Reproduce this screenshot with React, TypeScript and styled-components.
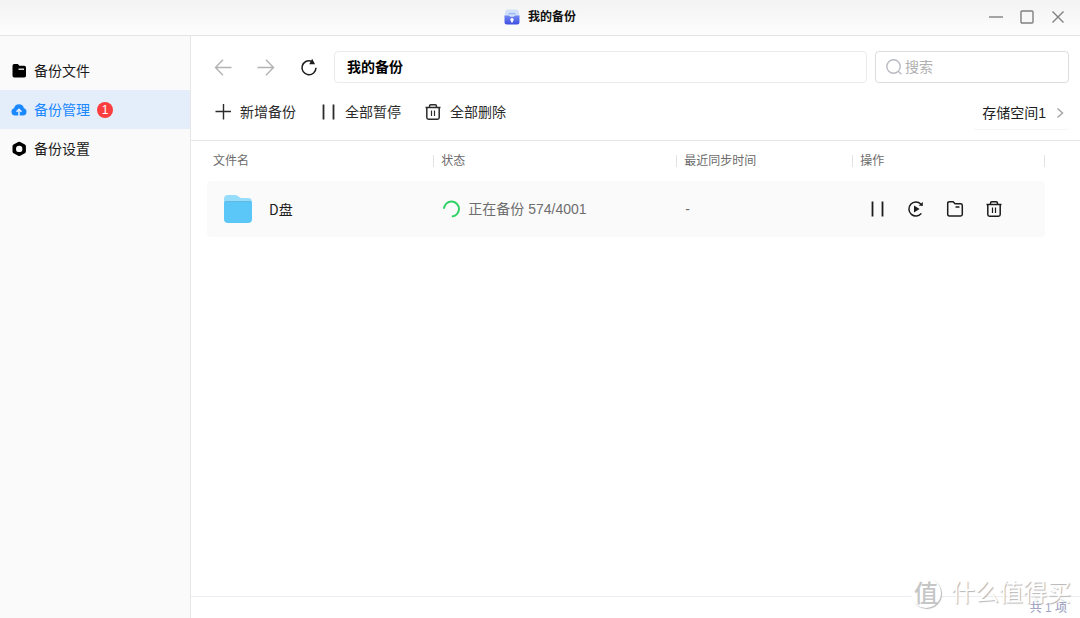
import React from "react";
import styled, { createGlobalStyle, css } from "styled-components";

const Global = createGlobalStyle`
  *, *::before, *::after { box-sizing: border-box; }
  body {
    margin: 0;
    background: #fff;
    color: #1c1c1c;
    font-family: "Liberation Sans", "Noto Sans CJK SC", sans-serif;
    font-size: 14px;
    line-height: 20px;
  }
  button, input { font: inherit; color: inherit; }
  svg { display: block; flex: none; }
`;

const Window = styled.div`
  position: relative;
  display: flex;
  flex-direction: column;
  min-height: 100vh;
`;

const TitleBar = styled.header`
  display: grid;
  grid-template-columns: 1fr auto 1fr;
  align-items: center;
  height: 36px;
  padding: 0 14px 2px;
  background: linear-gradient(#f3f3f3, #fdfdfd);
  border-bottom: 1px solid #e4e4e4;
`;

const Title = styled.h1`
  grid-column: 2;
  display: flex;
  align-items: center;
  gap: 8px;
  margin: 0;
  font-size: 12px;
  line-height: 16px;
  font-weight: 700;
  color: #111;
`;

const WindowControls = styled.div`
  display: flex;
  justify-content: flex-end;
  gap: 15px;
`;

const IconButton = styled.button<{ $size?: number }>`
  display: grid;
  place-items: center;
  width: ${(p) => p.$size ?? 20}px;
  height: ${(p) => p.$size ?? 20}px;
  padding: 0;
  border: 0;
  background: none;
  color: #1c1c1c;
  &:disabled { color: #b2b2b2; }
`;

const Body = styled.div`
  flex: 1;
  display: flex;
`;

const Sidebar = styled.nav`
  flex: none;
  width: 191px;
  padding-top: 15px;
  background: #fafafa;
  border-right: 1px solid #e6e6e6;
`;

const NavItem = styled.a<{ $active?: boolean }>`
  display: flex;
  align-items: center;
  gap: 7px;
  height: 39px;
  padding-left: 11px;
  color: #1a1a1a;
  text-decoration: none;
  ${(p) =>
    p.$active &&
    css`
      background: #e4eefb;
      color: #1a88ff;
    `}
`;

const Badge = styled.span`
  display: grid;
  place-items: center;
  width: 16px;
  height: 16px;
  border-radius: 50%;
  background: #fc3d3f;
  color: #fff;
  font-size: 12px;
  line-height: 16px;
`;

const Main = styled.main`
  flex: 1;
  min-width: 0;
  display: flex;
  flex-direction: column;
`;

const AddressRow = styled.div`
  display: flex;
  align-items: center;
  gap: 8px;
  padding: 15px 11px 0 22px;
`;

const History = styled.div`
  display: flex;
  gap: 23px;
  margin-right: 7px;
`;

const PathBar = styled.nav`
  flex: 1;
  height: 32px;
  padding: 5px 12px;
  border: 1px solid #ebebeb;
  border-radius: 4px;
`;

const PathLink = styled.a`
  color: #000;
  font-weight: 700;
  text-decoration: none;
`;

const SearchBox = styled.label`
  display: flex;
  align-items: center;
  gap: 2px;
  width: 194px;
  height: 32px;
  padding: 0 9px;
  border: 1px solid #dcdcdc;
  border-radius: 4px;
`;

const SearchInput = styled.input`
  flex: 1;
  min-width: 0;
  padding: 0;
  border: 0;
  outline: 0;
  background: none;
  &::placeholder { color: #b0b0b0; opacity: 1; }
`;

const ActionRow = styled.div`
  display: flex;
  align-items: center;
  gap: 24px;
  height: 58px;
  padding: 0 11px 0 24px;
  border-bottom: 1px solid #e6e6e6;
`;

const ActionButton = styled.button`
  display: flex;
  align-items: center;
  gap: 9px;
  padding: 0;
  border: 0;
  background: none;
  color: #2b2b2b;
`;

const StorageButton = styled.button`
  display: flex;
  align-items: center;
  gap: 8px;
  height: 32px;
  margin: 4px 0 0 auto;
  padding: 0 3px 0 8px;
  border: 0;
  border-bottom: 1px solid #f5f5f5;
  border-radius: 4px;
  background: none;
`;

const TableArea = styled.div`
  flex: 1;
  padding: 0 35px 0 16px;
`;

const Table = styled.table`
  width: 100%;
  table-layout: fixed;
  border-collapse: separate;
  border-spacing: 0;
`;

const HeadCell = styled.th<{ $width: number }>`
  width: ${(p) => p.$width}%;
  height: 40px;
  padding: 0;
  text-align: left;
  font-weight: 400;
  font-size: 12px;
  line-height: 12px;
  color: #6b6b6b;
`;

const HeadLabel = styled.span<{ $first?: boolean }>`
  display: block;
  padding-left: ${(p) => (p.$first ? 6 : 7)}px;
  border-left: ${(p) => (p.$first ? "0" : "1px solid #e2e2e2")};
`;

const HeadEnd = styled(HeadLabel)`
  border-right: 1px solid #e2e2e2;
`;

const Cell = styled.td`
  height: 56px;
  padding: 0 0 0 9px;
  background: #fafafa;
  color: #6e6e6e;
  &:first-child { padding-left: 16px; border-radius: 4px 0 0 4px; }
  &:last-child { border-radius: 0 4px 4px 0; }
`;

const FileName = styled.div`
  display: flex;
  align-items: center;
  gap: 16px;
  color: #1c1c1c;
  font-family: "Noto Sans CJK SC", sans-serif;
`;

const Status = styled.div`
  display: flex;
  align-items: center;
  gap: 8px;
`;

const RowActions = styled.div`
  display: flex;
  gap: 19px;
  padding-left: 6px;
`;

const Footer = styled.footer`
  height: 22px;
  padding: 0 13px;
  border-top: 1px solid #ececf2;
  text-align: right;
  font-size: 12px;
  line-height: 22px;
  font-weight: 500;
  color: #a3a5c4;
`;

const Watermark = styled.div`
  position: absolute;
  right: 9px;
  bottom: 9px;
  display: flex;
  align-items: center;
  gap: 10px;
  color: #fff;
  font-size: 24px;
  line-height: 32px;
  text-shadow: 1px 1px 1px #b4b4b4;
  pointer-events: none;
`;

const WatermarkSeal = styled.span`
  display: grid;
  place-items: center;
  width: 30px;
  height: 30px;
  border-radius: 50%;
  background: #fff;
  box-shadow: 1px 1px 1px #b8b8b8;
  color: #c6c6c6;
  font-weight: 500;
  font-size: 24px;
  text-shadow: none;
`;

const Svg = ({ size = 18, children }: { size?: number; children: React.ReactNode }) => (
  <svg width={size} height={size} viewBox={`0 0 ${size} ${size}`} fill="none" stroke="currentColor" strokeWidth="1.4" aria-hidden="true">
    {children}
  </svg>
);

const LockBoxIcon = () => (
  <svg width="16" height="16" viewBox="0 0 16 16" aria-hidden="true">
    <defs>
      <linearGradient id="box" x1="0" y1="0" x2="0" y2="1">
        <stop offset="0" stopColor="#7188f2" />
        <stop offset="1" stopColor="#3f4fe0" />
      </linearGradient>
    </defs>
    <path d="M3.5 0.5h9q1.5 0 2 1.5l1 5.500H.5L1.500 2q.5-1.500 2-1.500z" fill="#cfe0fb" />
    <path d="M4.500 4.700h7" stroke="#93b2f3" strokeWidth="1.200" />
    <path d="M.5 6.500h4.300q.7 1.200 3.200 1.200t3.200-1.200h4.300v6.500q0 2.500-2.500 2.500H3Q.5 15.500.5 13z" fill="url(#box)" />
    <circle cx="8" cy="10.700" r="1.700" fill="#fff" />
    <path d="M7.200 11h1.600v2.600H7.200z" fill="#fff" />
  </svg>
);

const SolidFolderIcon = () => (
  <Svg size={16}>
    <path d="M1.500 2.700Q1.500 1 3.200 1h3.600l1.600 1.800h4.900q1.700 0 1.700 1.700v8.300q0 1.700-1.700 1.700H3.200q-1.700 0-1.700-1.700z" fill="#000" stroke="none" />
    <path d="M7.500 6.200h5.500" stroke="#fafafa" strokeWidth="1.300" />
  </Svg>
);

const CloudIcon = () => (
  <Svg size={16}>
    <path d="M3.900 13.600a3.800 3.800 0 0 1-.8-7.400 5 5 0 0 1 9.800 0 3.800 3.800 0 0 1-.8 7.400z" fill="currentColor" stroke="none" />
    <path d="M8 14V8M5.500 9.800 8 7.300l2.500 2.500" stroke="#e4eefb" strokeWidth="1.500" />
  </Svg>
);

const HexIcon = () => (
  <Svg size={16}>
    <path fillRule="evenodd" d="M7.200 1q1-.6 2 0l4.700 2.500q1 .6 1 1.700v5.400q0 1.100-1 1.700l-4.700 2.500q-1 .6-2 0l-4.700-2.500q-1-.6-1-1.700V5.200q0-1.100 1-1.700zM8.200 4.700a3.200 3.200 0 1 0 0 6.400 3.200 3.200 0 0 0 0-6.400z" fill="#000" stroke="none" />
  </Svg>
);

const ArrowLeft = () => (
  <Svg size={20}><path d="M18.500 10.500H3M10 2.800 2.500 10.500l7.500 7.700" /></Svg>
);
const ArrowRight = () => (
  <Svg size={20}><path d="M1.500 10.500H17M10 2.800l7.500 7.700-7.500 7.700" /></Svg>
);
const ReloadIcon = () => (
  <Svg size={20}>
    <path d="M12.500 4.200A7 7 0 1 0 17 10.800" strokeWidth="1.500" />
    <path d="M13.200 1.800 16 7.200H10.200z" fill="currentColor" stroke="none" />
  </Svg>
);
const PlusIcon = () => (
  <Svg size={16}><path d="M8.500 0v15.500M.5 7.500H16" strokeWidth="1.400" /></Svg>
);
const PauseIcon = () => (
  <Svg size={16}><path d="M3.500 .5v15M13.500 .5v15" strokeWidth="1.800" /></Svg>
);
const TrashIcon = () => (
  <Svg size={16}>
    <path d="M.5 3.500h15M4.500 3.500V2.200Q4.500.8 5.900.8h4.200q1.400 0 1.400 1.400v1.300M1.800 3.500v10q0 1.700 1.700 1.700h9q1.700 0 1.700-1.700v-10" strokeWidth="1.500" />
    <path d="M6.500 6.500v5.500M9.500 6.500v5.500" strokeWidth="1.200" />
  </Svg>
);
const ResumeIcon = () => (
  <Svg size={18}>
    <path d="M13.800 4A7 7 0 1 0 14.400 13.400" strokeWidth="1.500" />
    <path d="M11.600 5.500 15.800 6V2zM7 5.600 12.600 9 7 12.400z" fill="currentColor" stroke="none" />
  </Svg>
);
const FolderIcon = () => (
  <Svg size={18}>
    <path d="M1.700 3.400q0-1.700 1.700-1.700h3.700l2 2h5.500q1.700 0 1.700 1.700v8.900q0 1.700-1.700 1.700H3.400q-1.700 0-1.700-1.700z" strokeWidth="1.500" />
    <path d="M9.500 7h4" strokeWidth="1.500" />
  </Svg>
);
const SearchIcon = () => (
  <Svg size={18}>
    <g stroke="#b9bbc4"><circle cx="8.500" cy="8.500" r="6.700" /><path d="m13.300 13.300 3 3" /></g>
  </Svg>
);
const ChevronIcon = () => (
  <Svg size={12}><path d="m3.500 1.500 5 4.500-5 4.500" stroke="#a6a6a6" strokeWidth="1.500" /></Svg>
);
const SpinnerIcon = () => (
  <Svg size={18}>
    <path d="M2 8.800A7.500 7.500 0 1 1 9.800 16.500" stroke="#2fd265" strokeWidth="2" />
  </Svg>
);
const BlueFolder = () => (
  <svg width="30" height="30" viewBox="0 0 30 30" aria-hidden="true">
    <path d="M1 5q0-4 4-4h7q2 0 3.500 1.500T19 4h6q4 0 4 4v8H1z" fill="#96dcfb" />
    <path d="M1 8h28v17q0 4-4 4H5q-4 0-4-4z" fill="#5bc7f9" />
    <path d="M2 7.500h26" stroke="#62b9e2" />
  </svg>
);

const navItems = [
  { label: "备份文件", icon: <SolidFolderIcon /> },
  { label: "备份管理", icon: <CloudIcon />, active: true, count: 1 },
  { label: "备份设置", icon: <HexIcon /> },
];

const toolbar = [
  { label: "新增备份", icon: <PlusIcon /> },
  { label: "全部暂停", icon: <PauseIcon /> },
  { label: "全部删除", icon: <TrashIcon /> },
];

const rowActions = [
  { label: "暂停", icon: <PauseIcon /> },
  { label: "立即备份", icon: <ResumeIcon /> },
  { label: "打开文件夹", icon: <FolderIcon /> },
  { label: "删除", icon: <TrashIcon /> },
];

export default function App() {
  return (
    <>
      <Global />
      <Window>
        <TitleBar>
          <Title><LockBoxIcon />我的备份</Title>
          <WindowControls>
            <IconButton $size={16} aria-label="最小化"><Svg size={16}><path d="M1 8h14" stroke="#808080" /></Svg></IconButton>
            <IconButton $size={16} aria-label="最大化"><Svg size={16}><rect x="2" y="2" width="12" height="12" rx="1" stroke="#808080" /></Svg></IconButton>
            <IconButton $size={16} aria-label="关闭"><Svg size={16}><path d="m2.500 2.500 11 11m0-11-11 11" stroke="#808080" /></Svg></IconButton>
          </WindowControls>
        </TitleBar>
        <Body>
          <Sidebar>
            {navItems.map((item) => (
              <NavItem key={item.label} href="#" $active={item.active}>
                {item.icon}
                {item.label}
                {item.count && <Badge>{item.count}</Badge>}
              </NavItem>
            ))}
          </Sidebar>
          <Main>
            <AddressRow>
              <History>
                <IconButton disabled aria-label="后退"><ArrowLeft /></IconButton>
                <IconButton disabled aria-label="前进"><ArrowRight /></IconButton>
                <IconButton aria-label="刷新"><ReloadIcon /></IconButton>
              </History>
              <PathBar><PathLink href="#">我的备份</PathLink></PathBar>
              <SearchBox>
                <SearchIcon />
                <SearchInput type="text" placeholder="搜索" aria-label="搜索" />
              </SearchBox>
            </AddressRow>
            <ActionRow>
              {toolbar.map((t) => (
                <ActionButton key={t.label}>{t.icon}{t.label}</ActionButton>
              ))}
              <StorageButton>存储空间1<ChevronIcon /></StorageButton>
            </ActionRow>
            <TableArea>
              <Table>
                <thead>
                  <tr>
                    <HeadCell $width={27}><HeadLabel $first>文件名</HeadLabel></HeadCell>
                    <HeadCell $width={29}><HeadLabel>状态</HeadLabel></HeadCell>
                    <HeadCell $width={21}><HeadLabel>最近同步时间</HeadLabel></HeadCell>
                    <HeadCell $width={23}><HeadEnd>操作</HeadEnd></HeadCell>
                  </tr>
                </thead>
                <tbody>
                  <tr>
                    <Cell><FileName><BlueFolder />D盘</FileName></Cell>
                    <Cell><Status><SpinnerIcon />正在备份 574/4001</Status></Cell>
                    <Cell>-</Cell>
                    <Cell>
                      <RowActions>
                        {rowActions.map((a) => (
                          <IconButton key={a.label} aria-label={a.label}>{a.icon}</IconButton>
                        ))}
                      </RowActions>
                    </Cell>
                  </tr>
                </tbody>
              </Table>
            </TableArea>
            <Footer>共 1 项</Footer>
          </Main>
        </Body>
        <Watermark aria-hidden="true">
          <WatermarkSeal>值</WatermarkSeal>
          什么值得买
        </Watermark>
      </Window>
    </>
  );
}
